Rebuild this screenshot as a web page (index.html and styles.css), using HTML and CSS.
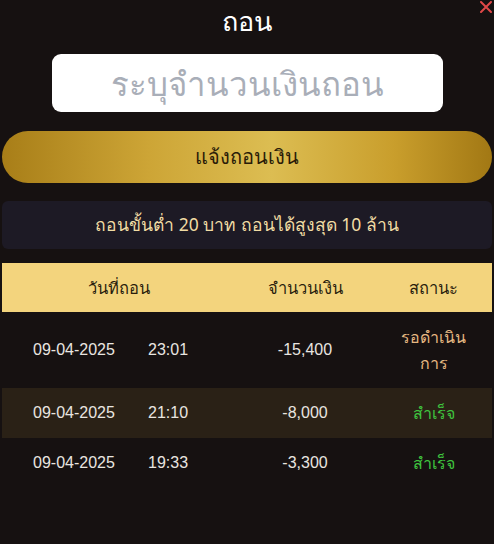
FILE: index.html
```html
<!DOCTYPE html>
<html lang="th">
  <head>
    <meta charset="UTF-8" />
    <meta name="viewport" content="width=device-width, initial-scale=1" />
    <title>ถอน</title>
    <link rel="stylesheet" href="styles.css">
  </head>

  <body>
    <div class="modal">
      <!-- Header -->
      <header class="modal-head">
        <h1>ถอน</h1>
        <svg class="close" width="12" height="12" viewBox="0 0 12 12">
          <path d="M1 1 L11 11 M11 1 L1 11" stroke="#e04848" stroke-width="2" stroke-linecap="round" />
        </svg>
      </header>

      <!-- Amount input -->
      <div class="input-wrap">
        <input type="text" class="amount-input" placeholder="ระบุจำนวนเงินถอน" />
      </div>

      <button class="submit-button">แจ้งถอนเงิน</button>

      <div class="notice">ถอนขั้นต่ำ 20 บาท ถอนได้สูงสุด 10 ล้าน</div>

      <!-- History table -->
      <div class="history">
        <div class="history-head">
          <span>วันที่ถอน</span>
          <span>จำนวนเงิน</span>
          <span>สถานะ</span>
        </div>

        <div class="history-row tall">
          <div class="when"><span class="date">09-04-2025</span><span class="time">23:01</span></div>
          <span class="amount">-15,400</span>
          <span class="status pending">รอดำเนิน<br />การ</span>
        </div>

        <div class="history-row highlight">
          <div class="when"><span class="date">09-04-2025</span><span class="time">21:10</span></div>
          <span class="amount">-8,000</span>
          <span class="status done">สำเร็จ</span>
        </div>

        <div class="history-row">
          <div class="when"><span class="date">09-04-2025</span><span class="time">19:33</span></div>
          <span class="amount">-3,300</span>
          <span class="status done">สำเร็จ</span>
        </div>
      </div>
    </div>
  </body>
</html>
```

FILE: styles.css
```css
/* Global Styles */
body {
  font-family: 'Noto Sans', 'Liberation Sans', sans-serif;
  margin: 0;
  padding: 0;
  background-color: #161111;
  color: #fff;
  width: 494px;
  height: 544px;
  overflow: hidden;
}

.modal {
  padding: 0 2px;
}

.modal-head {
  position: relative;
  height: 42px;
  display: flex;
  justify-content: center;
  align-items: center;
}

.modal-head h1 {
  margin: 0;
  font-size: 27px;
  font-weight: 500;
  color: #fff;
}

.close {
  position: absolute;
  right: 0;
  top: 1px;
}

.input-wrap {
  display: flex;
  justify-content: center;
  margin-top: 12px;
}

.amount-input {
  width: 391px;
  height: 58px;
  box-sizing: border-box;
  border: none;
  border-radius: 9px;
  background: #fff;
  font-family: inherit;
  font-size: 33px;
  font-weight: 500;
  text-align: center;
  outline: none;
}

.amount-input::placeholder {
  color: #a9aeb8;
}

.submit-button {
  display: block;
  width: 100%;
  height: 52px;
  margin-top: 19px;
  border: none;
  border-radius: 26px;
  background: linear-gradient(90deg, #a87e18 0%, #cda536 30%, #dcbd52 55%, #c99e2c 80%, #a27814 100%);
  color: #2a1c08;
  font-family: inherit;
  font-size: 20px;
}

.notice {
  margin-top: 18px;
  height: 48px;
  display: flex;
  justify-content: center;
  align-items: center;
  background-color: #1d1a25;
  border-radius: 6px;
  color: #f1dca4;
  font-size: 17.5px;
}

/* History */
.history {
  margin-top: 14px;
}

.history-head,
.history-row {
  display: grid;
  grid-template-columns: 233px 140px 1fr;
  align-items: center;
}

.history-head {
  height: 49px;
  background-color: #f3d47d;
  color: #2a1e0e;
  font-size: 16.5px;
  text-align: center;
}

.history-row {
  height: 50px;
  font-family: 'Liberation Sans', sans-serif;
  font-size: 16px;
  color: #e9e5e0;
}

.history-row.tall {
  height: 76px;
}

.history-row.highlight {
  background-color: #2a2116;
}

.when {
  display: flex;
  padding-left: 31px;
}

.date {
  width: 115px;
}

.amount {
  text-align: center;
}

.status {
  text-align: center;
  font-family: 'Noto Sans', sans-serif;
  font-size: 16px;
  line-height: 26px;
}

.status.pending {
  color: #e6b882;
}

.status.done {
  color: #3fc43f;
}
```
